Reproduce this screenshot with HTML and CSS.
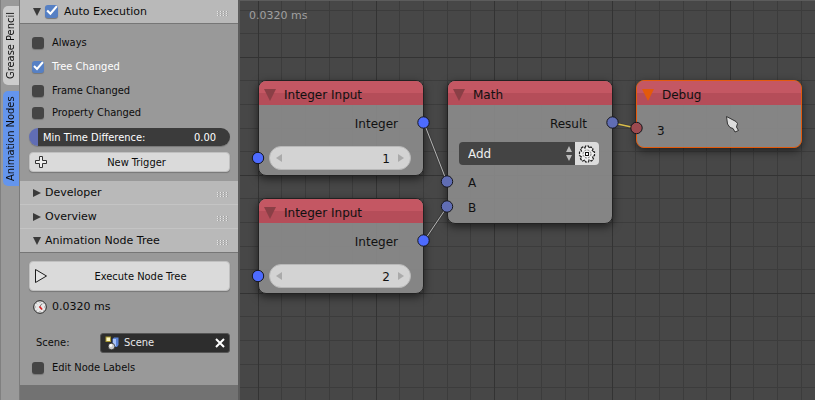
FILE: index.html
```html
<!DOCTYPE html>
<html lang="en">
<head>
<meta charset="utf-8">
<title>Animation Nodes</title>
<link rel="stylesheet" href="styles.css">
</head>
<body>
<div class="app">
  <nav class="tabs">
    <button class="tab" type="button">Grease Pencil</button>
    <button class="tab tab-active" type="button">Animation Nodes</button>
  </nav>

  <aside class="sidebar">
    <section>
      <header class="head head-open">
        <svg class="tri" viewBox="0 0 8 8"><path d="M0 0h8L4 8z"/></svg>
        <input class="check" type="checkbox" id="auto" checked>
        <label for="auto">Auto Execution</label>
        <span class="grip"></span>
      </header>
      <div class="body body-auto">
        <div class="row"><input class="check" type="checkbox" id="always"><label for="always">Always</label></div>
        <div class="row row-on"><input class="check" type="checkbox" id="tree" checked><label for="tree">Tree Changed</label></div>
        <div class="row"><input class="check" type="checkbox" id="frame"><label for="frame">Frame Changed</label></div>
        <div class="row"><input class="check" type="checkbox" id="prop"><label for="prop">Property Changed</label></div>
        <div class="slider">
          <label for="mintime">Min Time Difference:</label>
          <input id="mintime" type="text" value="0.00">
        </div>
        <button class="btn" type="button">
          <svg class="icon" viewBox="0 0 14 14"><path d="M5.500 1.500h3v4h4v3h-4v4h-3v-4h-4v-3h4z" fill="#eee" stroke="#333"/></svg>
          <span>New Trigger</span>
        </button>
      </div>
    </section>

    <section>
      <header class="head"><svg class="tri" viewBox="0 0 8 8"><path d="M0 0v8l8-4z"/></svg><span>Developer</span><span class="grip"></span></header>
    </section>
    <section>
      <header class="head"><svg class="tri" viewBox="0 0 8 8"><path d="M0 0v8l8-4z"/></svg><span>Overview</span><span class="grip"></span></header>
    </section>

    <section>
      <header class="head head-open"><svg class="tri" viewBox="0 0 8 8"><path d="M0 0h8L4 8z"/></svg><span>Animation Node Tree</span><span class="grip"></span></header>
      <div class="body body-tree">
        <button class="btn btn-tall" type="button">
          <svg class="icon" viewBox="0 0 14 14"><path d="M1.500 .5v13L12.500 7z" fill="#e4e4e4" stroke="#1c1c1c" stroke-linejoin="round"/></svg>
          <span>Execute Node Tree</span>
        </button>
        <div class="timing">
          <svg class="icon" viewBox="0 0 14 14"><circle cx="7" cy="7" r="6.300" fill="#e8e8e8" stroke="#222"/><path d="M7 2v1M7 11v1M2 7h1M11 7h1M10.500 3.500l-.7.700M3.500 3.500l.7.700M10.500 10.500l-.7-.7M3.500 10.500l.7-.7" stroke="#999"/><path d="M9 3.500L6.500 7" stroke="#777"/><path d="M6.500 6.500l2.500 3" stroke="#d22" stroke-width="1.800"/></svg>
          <span>0.0320 ms</span>
        </div>
        <div class="scene">
          <label for="scene">Scene:</label>
          <div class="scene-box">
            <svg class="icon" viewBox="0 0 14 14"><path d="M7.500 3l1.500-1.500h4.500V9L12 11H7.500z" fill="#5b83d6"/><path d="M8 3h3v7H8z" fill="#a9c3f7"/><rect x="1" y="1" width="4.500" height="4.500" fill="#fbf6c4" stroke="#a8962e"/><circle cx="6.500" cy="10.500" r="3.300" fill="#ccc" stroke="#111" stroke-width=".6"/><circle cx="5.800" cy="9.500" r="1.400" fill="#fff"/></svg>
            <input id="scene" type="text" value="Scene">
            <button class="clear" type="button" aria-label="Clear scene"><svg viewBox="0 0 10 10"><path d="M1 1l8 8M9 1L1 9" stroke="#fff" stroke-width="2"/></svg></button>
          </div>
        </div>
        <div class="row"><input class="check" type="checkbox" id="edit"><label for="edit">Edit Node Labels</label></div>
      </div>
    </section>
  </aside>

  <main class="canvas">
    <div class="time">0.0320 ms</div>

    <article class="node n-int1">
      <header class="title"><svg class="ntri" viewBox="0 0 12 12"><path d="M0 0h12L6 12z"/></svg><span>Integer Input</span></header>
      <div class="out">Integer</div>
      <div class="number">
        <button type="button" aria-label="Decrease"><svg viewBox="0 0 6 8"><path d="M6 0v8L0 4z"/></svg></button>
        <input type="text" value="1" aria-label="Integer">
        <button type="button" aria-label="Increase"><svg viewBox="0 0 6 8"><path d="M0 0v8l6-4z"/></svg></button>
      </div>
    </article>

    <article class="node n-int2">
      <header class="title"><svg class="ntri" viewBox="0 0 12 12"><path d="M0 0h12L6 12z"/></svg><span>Integer Input</span></header>
      <div class="out">Integer</div>
      <div class="number">
        <button type="button" aria-label="Decrease"><svg viewBox="0 0 6 8"><path d="M6 0v8L0 4z"/></svg></button>
        <input type="text" value="2" aria-label="Integer">
        <button type="button" aria-label="Increase"><svg viewBox="0 0 6 8"><path d="M0 0v8l6-4z"/></svg></button>
      </div>
    </article>

    <article class="node n-math">
      <header class="title"><svg class="ntri" viewBox="0 0 12 12"><path d="M0 0h12L6 12z"/></svg><span>Math</span></header>
      <div class="out">Result</div>
      <div class="op">
        <div class="op-select">
          <select aria-label="Operation"><option>Add</option></select>
          <svg class="updown" viewBox="0 0 6 16"><path d="M3 0l3 6H0zM0 9h6l-3 6z"/></svg>
        </div>
        <button class="gear" type="button" aria-label="Settings"><svg viewBox="0 0 18 18"><path d="M7 3L7.500 1h3L11 3l2-1 2 2-1 2 2.500 1v3.500L14.500 12l1 2-2 2-2.500-1-.5 2h-3L7 15l-2.500 1-2-2 1-2L1.500 10.500V7L3.500 6l-1-2 2-2z" fill="#f0f0f0" stroke="#222" stroke-width="1.200" stroke-dasharray="3 .8"/><circle cx="9" cy="9" r="4" fill="none" stroke="#777" stroke-dasharray="2 1.140"/><rect x="7.500" y="7.500" width="3" height="3" fill="#fff" stroke="#111"/></svg></button>
      </div>
      <div class="in">A</div>
      <div class="in">B</div>
    </article>

    <article class="node n-debug">
      <header class="title"><svg class="ntri" viewBox="0 0 12 12"><path d="M0 0h12L6 12z"/></svg><span>Debug</span></header>
      <div class="in in-value">3</div>
    </article>

    <svg class="links" width="575" height="400" viewBox="240 0 575 400">
      <g fill="none" stroke="#333" stroke-width="3" opacity=".5"><path d="M424 123L447 182M424 241L447 207M613 123L636 128"/></g>
      <g fill="none" stroke="#b4b4b4"><path d="M424 123L447 182M424 241L447 207"/><path d="M613 123L636 128" stroke="#d8bc4a" stroke-width="1.500"/></g>
      <g stroke="#16161c">
        <g fill="#4d6bff"><circle cx="423.500" cy="122.500" r="5.700"/><circle cx="258" cy="158" r="5.700"/><circle cx="423.500" cy="240.500" r="5.700"/><circle cx="258" cy="276" r="5.700"/></g>
        <g fill="#606db4"><circle cx="447" cy="181.500" r="5.700"/><circle cx="447" cy="206.500" r="5.700"/><circle cx="612.500" cy="122.500" r="5.700"/></g>
        <circle cx="636.500" cy="128" r="5.700" fill="#9c4a50"/>
      </g>
      <path d="M726.500 116.500L736 121.500L737.500 123.500L736.500 127L738.500 130.500L735 132L733 128.500L730 127.500L727.500 124Z" fill="#dcdcdc" stroke="#333" stroke-linejoin="round"/>
    </svg>
  </main>
</div>
</body>
</html>
```
FILE: styles.css
```css
* { box-sizing: border-box; }
body { margin: 0; font: 11px/16px "DejaVu Sans Condensed", "DejaVu Sans", sans-serif; color: #0c0c0c; }
button, input, select { font: inherit; color: inherit; margin: 0; padding: 0; border: 0; background: none; min-width: 0; }
svg { display: block; flex: none; }
.app { display: flex; min-height: 100vh; overflow: hidden; }

.tabs { flex: none; width: 20px; padding: 6px 0 0 2px; background: #999; border-left: 1px solid #808080; border-right: 1px solid #7b7b7b; display: flex; flex-direction: column; align-items: stretch; gap: 6px; }
.tab { writing-mode: vertical-rl; transform: rotate(180deg); height: 79px; line-height: 16px; text-align: center; background: #ccc; border-radius: 0 5px 5px 0; }
.tab-active { height: 95px; background: #6495ed; }

.sidebar { flex: none; width: 220px; background: #727272; border-right: 2px solid #5c5c5c; }
.head { display: flex; align-items: center; gap: 4px; height: 24px; padding: 0 10px 0 13px; background: #b9b9b9; border-bottom: 1px solid #c4c4c4; font-family: "DejaVu Sans", sans-serif; }
.head-open { border-bottom-color: #767676; }
.head .check { width: 13px; height: 13px; margin-right: 2px; }
.tri { width: 8px; height: 8px; fill: #3a3a3a; }
.grip { margin: 3px 0 0 auto; width: 11px; height: 5px; background: repeating-linear-gradient(90deg, #e6e6e6 0 1px, #a0a0a0 1px 2px, transparent 2px 3px); -webkit-mask: linear-gradient(#000 0 1px, transparent 1px 2px, #000 2px 3px, transparent 3px 4px, #000 4px 5px); }
.body { background: #999; display: flex; flex-direction: column; }
.body-auto { padding: 8px 8px 9px 9px; }
.body-tree { padding: 8px 8px 6px 9px; }
.row { display: flex; align-items: center; gap: 8px; height: 22px; padding-left: 3px; }
.row-on { height: 26px; color: #fff; }
.check { appearance: none; flex: none; width: 12px; height: 12px; border-radius: 3px; background: #454545; box-shadow: 0 1px 1px #777; }
.check:checked { background: #5680c4 url("data:image/svg+xml,%3Csvg xmlns='http://www.w3.org/2000/svg' viewBox='0 0 12 12'%3E%3Cpath d='M2 5l3 3 6-7' fill='none' stroke='white' stroke-width='2'/%3E%3C/svg%3E"); }
.slider { display: flex; align-items: center; height: 18px; margin-top: 4px; padding: 1px 14px 0; border-radius: 9px; color: #fff; background: linear-gradient(90deg, #606db4 9px, #3b3b3b 9px); box-shadow: 0 1px 1px #777; }
.slider label { flex: none; }
.slider input { flex: 1; width: 0; text-align: right; }
.btn { display: flex; align-items: center; height: 20px; margin-top: 6px; padding: 0 4px; background: #dadada; border: 1px solid #c0c0c0; border-radius: 4px; box-shadow: 0 1px 1px #777; }
.btn span { flex: 1; padding-top: 1px; text-align: center; }
.btn-tall { height: 30px; margin-top: 0; }
.btn-tall span { padding-left: 8px; }
.icon { width: 14px; height: 14px; }
.timing { display: flex; align-items: center; gap: 5px; height: 32px; padding-left: 4px; font-family: "DejaVu Sans", sans-serif; }
.scene { display: flex; align-items: center; height: 20px; margin: 10px 0 4px; padding-left: 7px; }
.scene label { flex: 1; }
.scene-box { display: flex; align-items: center; gap: 5px; width: 130px; height: 20px; padding: 0 4px; background: #2d2d2d; border: 1px solid #555; border-radius: 3px; color: #e8e8e8; }
.scene-box input { flex: 1; width: 0; }
.clear svg { width: 10px; height: 10px; }

.canvas {
  position: relative; flex: 1; min-width: 0; background-color: #474747;
  background-image:
    linear-gradient(90deg, #333 1px, transparent 1px),
    linear-gradient(#333 1px, transparent 1px),
    linear-gradient(90deg, transparent 23px, #3c3c3c 23px 24px, transparent 24px 47px, #3c3c3c 47px 48px, transparent 48px 71px, #3c3c3c 71px 72px, transparent 72px 94px, #3c3c3c 94px 95px, transparent 95px),
    linear-gradient(transparent 23px, #3c3c3c 23px 24px, transparent 24px 47px, #3c3c3c 47px 48px, transparent 48px 71px, #3c3c3c 71px 72px, transparent 72px 94px, #3c3c3c 94px 95px, transparent 95px);
  background-size: 118px 118px; background-position: 18px 56px;
  border-top: 1px solid #5c5c5c;
  font: 12px/16px "DejaVu Sans", sans-serif;
}
.time { padding: 7px 9px; color: #a0a0a0; font-size: 11px; }
.node { position: absolute; width: 166px; border: 1px solid #222; border-radius: 8px; background: rgba(138, 138, 138, .93); box-shadow: 0 3px 8px rgba(0, 0, 0, .55); overflow: hidden; color: #111; }
.n-int1 { left: 18px; top: 79px; height: 96px; }
.n-int2 { left: 18px; top: 197px; height: 96px; }
.n-math { left: 207px; top: 79px; height: 144px; }
.n-debug { left: 396px; top: 79px; height: 68px; border-color: #e35a0c; }
.title { display: flex; align-items: center; gap: 8px; height: 24px; padding: 3px 5px 0; background: linear-gradient(#c45763 50%, #b54d59 50%); }
.ntri { width: 12px; height: 12px; fill: #8a3f46; }
.n-debug .ntri { fill: #e35a0c; }
.out { margin: 11px 25px 0; text-align: right; }
.number { display: flex; align-items: center; height: 24px; margin: 14px 12px 0 10px; padding: 0 6px; border: 1px solid #b8b8b8; border-radius: 12px; background: #d3d3d3; }
.number input { flex: 1; width: 0; padding: 2px 8px 0 0; text-align: right; }
.number svg { width: 6px; height: 8px; fill: #aaa; }
.op { display: flex; height: 23px; margin: 10px 13px 6px 11px; }
.op-select { position: relative; flex: 1; }
.op-select select { appearance: none; width: 100%; height: 23px; padding: 0 9px; border-radius: 4px 0 0 4px; background: #444; color: #eee; }
.updown { position: absolute; right: 3px; top: 4px; width: 6px; height: 16px; fill: #bbb; pointer-events: none; }
.gear { width: 24px; background: #dcdcdc; border-radius: 0 4px 4px 0; display: grid; place-items: center; }
.gear svg { width: 18px; height: 18px; }
.in { height: 25px; padding: 4px 20px; }
.in-value { padding-top: 18px; height: 40px; }
.links { position: absolute; left: 0; top: -1px; pointer-events: none; }
```
